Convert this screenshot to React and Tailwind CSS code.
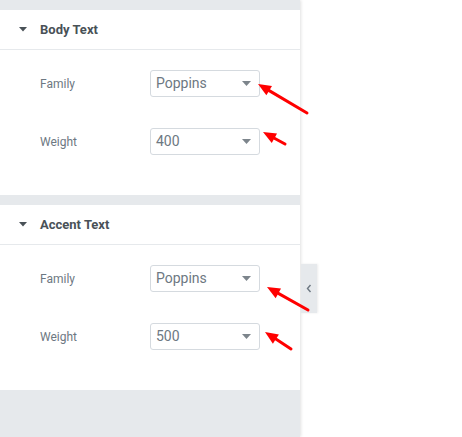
const sections = [
  { title: "Body Text", family: "Poppins", weight: "400" },
  { title: "Accent Text", family: "Poppins", weight: "500" },
];

// arrow annotations: [tailX, tailY, tipX, tipY]
const arrows = [
  [307, 113, 258, 84],
  [285, 144, 263, 132],
  [308, 310, 267, 287],
  [291, 349, 265, 332],
];

function Select({ value }) {
  return (
    <div className="w-[110px] h-[27px] border border-[#d5dadf] rounded-[3px] bg-white flex items-center justify-between pl-[5px] pr-[8px]">
      <span className="text-[14px] text-[#6d7882]">{value}</span>
      <svg width="9" height="5" viewBox="0 0 9 5">
        <path d="M0 0h9L4.5 5z" fill="#7d858c" />
      </svg>
    </div>
  );
}

function Row({ label, value }) {
  return (
    <div className="flex items-center h-[27px]">
      <div className="w-[150px] pl-[40px] text-[12px] text-[#6d7882]">
        {label}
      </div>
      <Select value={value} />
    </div>
  );
}

function Section({ title, family, weight }) {
  return (
    <div className="bg-white">
      <div className="h-[40px] border-b border-[#e6e9ec] flex items-center">
        <svg width="8" height="5" viewBox="0 0 8 5" className="ml-[19px] mr-[13px]">
          <path d="M0 0h8L4 4.5z" fill="#495157" />
        </svg>
        <span className="text-[13px] font-bold text-[#495157]">{title}</span>
      </div>
      <div className="pt-[20px] pb-[40px] flex flex-col gap-[31px]">
        <Row label="Family" value={family} />
        <Row label="Weight" value={weight} />
      </div>
    </div>
  );
}

export default function App() {
  return (
    <div
      className="relative w-[462px] h-[437px] bg-white flex overflow-hidden"
      style={{ fontFamily: "Roboto, 'Liberation Sans', sans-serif" }}
    >
      <div className="w-[300px] h-full bg-[#e6e9ec] pt-[10px] flex flex-col gap-[10px] shadow-[1px_0_3px_rgba(0,0,0,0.12)]">
        {sections.map((s) => (
          <Section key={s.title} {...s} />
        ))}
      </div>
      <div className="pt-[264px] pl-[1px]">
        <div className="w-[16px] h-[49px] bg-[#e6e9ec] flex items-center justify-center shadow-[1px_0_2px_rgba(0,0,0,0.08)]">
          <svg width="6" height="9" viewBox="0 0 6 9">
            <path d="M4.5 1L1.5 4.5L4.5 8" stroke="#6d7882" strokeWidth="1.4" fill="none" />
          </svg>
        </div>
      </div>
      <svg className="absolute inset-0 pointer-events-none" width="462" height="437">
        {arrows.map(([x1, y1, x2, y2], i) => {
          const a = Math.atan2(y2 - y1, x2 - x1);
          const L = 13;
          const W = 5.5;
          const bx = x2 - L * Math.cos(a);
          const by = y2 - L * Math.sin(a);
          const px = -Math.sin(a) * W;
          const py = Math.cos(a) * W;
          return (
            <g key={i}>
              <line x1={x1} y1={y1} x2={bx} y2={by} stroke="#f00" strokeWidth="3" strokeLinecap="round" />
              <path d={`M${x2} ${y2}L${bx + px} ${by + py}L${bx - px} ${by - py}Z`} fill="#f00" />
            </g>
          );
        })}
      </svg>
    </div>
  );
}
